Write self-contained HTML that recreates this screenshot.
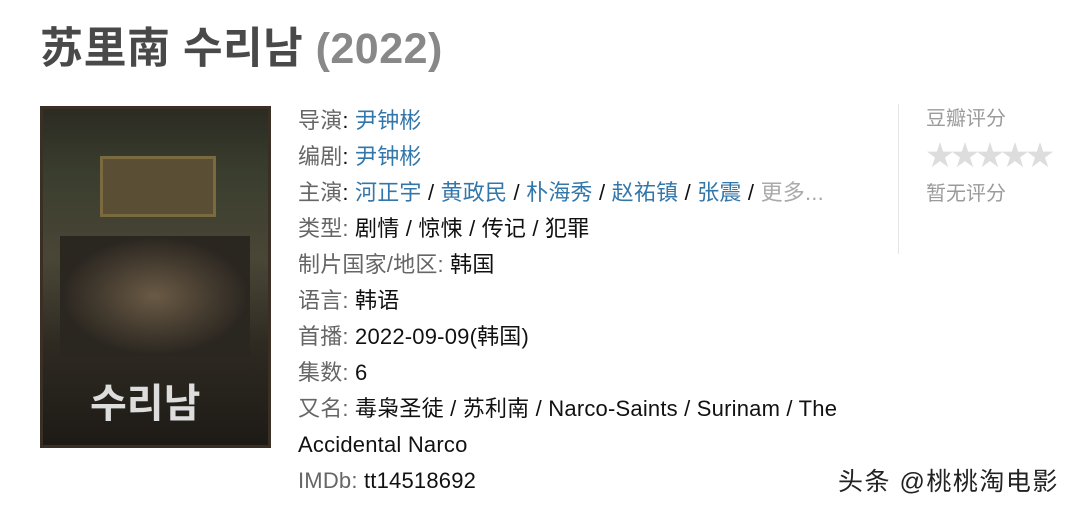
<!DOCTYPE html><html><head><meta charset="utf-8"><style>
body{margin:0;width:1080px;height:508px;background:#fff;font-family:"Liberation Sans","Noto Sans CJK SC",sans-serif;overflow:hidden;position:relative}
h1{position:absolute;left:40px;top:20px;margin:0;font-size:43px;font-weight:bold;color:#494949;line-height:58px;letter-spacing:0.5px}
h1 span{color:#888}
.poster{position:absolute;left:40px;top:106px;width:231px;height:342px;background:linear-gradient(180deg,#2b2a22 0%,#3a3e2e 20%,#4a4636 45%,#2e2a22 70%,#1d1a16 100%);box-shadow:inset 0 0 0 3px #3a2f25}
.info{position:absolute;left:298px;top:103px;font-size:22px;line-height:36px;color:#111;letter-spacing:0.2px}
.info .l{color:#666}
.info a{color:#3377aa;text-decoration:none}
.vl{position:absolute;left:898px;top:104px;width:1px;height:150px;background:#e5e5e5}
.r{position:absolute;left:926px;color:#9b9b9b;font-size:20px}
.wm{position:absolute;left:838px;top:462px;font-size:25px;color:#222;letter-spacing:1.5px}
</style></head><body>
<h1>苏里南 수리남 <span>(2022)</span></h1>
<div class="poster">
<div style="position:absolute;left:60px;top:50px;width:110px;height:55px;background:#5a4e34;border:3px solid #7a6a40"></div>
<div style="position:absolute;left:20px;top:130px;width:190px;height:120px;background:radial-gradient(ellipse at center,#6a5a45,#2a2620 70%)"></div>
<div style="position:absolute;left:50px;top:265px;font-size:40px;font-weight:bold;color:#ddd">수리남</div>
</div>
<div class="info">
<div><span class="l">导演</span>: <a>尹钟彬</a></div>
<div><span class="l">编剧</span>: <a>尹钟彬</a></div>
<div><span class="l">主演</span>: <a>河正宇</a> / <a>黄政民</a> / <a>朴海秀</a> / <a>赵祐镇</a> / <a>张震</a> / <span style="color:#aaa">更多...</span></div>
<div><span class="l">类型:</span> 剧情 / 惊悚 / 传记 / 犯罪</div>
<div><span class="l">制片国家/地区:</span> 韩国</div>
<div><span class="l">语言:</span> 韩语</div>
<div><span class="l">首播:</span> 2022-09-09(韩国)</div>
<div><span class="l">集数:</span> 6</div>
<div><span class="l">又名:</span> 毒枭圣徒 / 苏利南 / Narco-Saints / Surinam / The</div>
<div>Accidental Narco</div>
<div><span class="l">IMDb:</span> tt14518692</div>
</div>
<div class="vl"></div>
<div class="r" style="top:102px">豆瓣评分</div>
<div class="r" style="top:139px;color:#ddd;font-size:28px;letter-spacing:-3px;line-height:34px">★★★★★</div>
<div class="r" style="top:177px">暂无评分</div>
<div class="wm">头条 @桃桃淘电影</div>
</body></html>
